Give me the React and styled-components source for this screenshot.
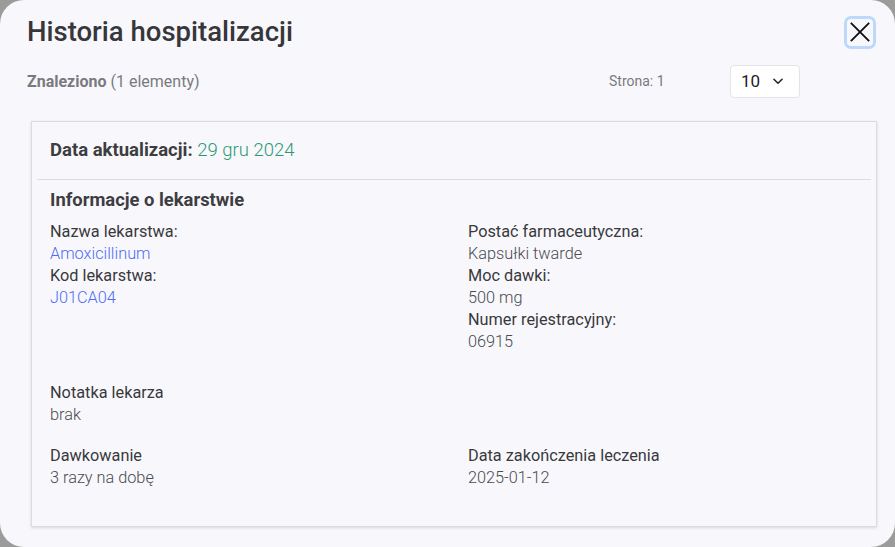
import React from 'react'
import styled, { createGlobalStyle } from 'styled-components'

const Global = createGlobalStyle`
    html, body { margin: 0; padding: 0; }
    body {
        background: #9b9b9b;
        font-family: Roboto, 'Liberation Sans', sans-serif;
        overflow: hidden;
    }
`

const Modal = styled.div`
    box-sizing: border-box;
    width: 895px;
    height: 547px;
    background: #f8f8fc;
    border-radius: 24px;
    padding: 0 18px 0 27px;
    display: flex;
    flex-direction: column;
`

const Header = styled.div`
    display: flex;
    align-items: center;
    justify-content: space-between;
    height: 62px;
`

const Title = styled.h1`
    margin: 0;
    font-size: 27.5px;
    font-weight: 500;
    color: #36363b;
`

const CloseButton = styled.button`
    width: 32px;
    height: 33px;
    padding: 0;
    margin-right: 1px;
    margin-top: 2px;
    border: 3px solid #bcd8fd;
    border-radius: 7px;
    background: #f8f8fc;
    display: flex;
    align-items: center;
    justify-content: center;
    cursor: pointer;
`

const Toolbar = styled.div`
    display: flex;
    align-items: center;
    height: 38px;
`

const Found = styled.div`
    flex: 1;
    font-size: 16px;
    color: #7a7a7e;
    b { font-weight: 700; }
`

const PageInfo = styled.div`
    font-size: 14px;
    color: #7a7a7e;
    width: 121px;
`

const Select = styled.div`
    box-sizing: border-box;
    width: 70px;
    height: 33px;
    margin-right: 77px;
    background: #fff;
    border: 1px solid #e3e3e8;
    border-radius: 4px;
    display: flex;
    align-items: center;
    gap: 11px;
    padding-left: 10px;
    font-size: 17px;
    color: #222;
`

const Card = styled.div`
    margin-top: 21px;
    margin-left: 4px;
    border: 1px solid #dcdce0;
    background: #f8f8fc;
    box-shadow: 0 1px 3px rgba(0, 0, 0, 0.12);
`

const CardHead = styled.div`
    padding: 17px 18px 18px;
    font-size: 18.5px;
    line-height: 22px;
    color: #3d3d42;
    b { font-weight: 700; }
    span { color: #2a9a74; font-weight: 300; }
`

const Divider = styled.hr`
    margin: 0 5px;
    border: 0;
    border-top: 1px solid #dcdce0;
`

const Body = styled.div`
    padding: 9px 18px 37px;
`

const SectionTitle = styled.h2`
    margin: 0 0 10px;
    font-size: 18.4px;
    line-height: 22px;
    font-weight: 700;
    color: #3d3d42;
`

const Grid = styled.div`
    display: grid;
    grid-template-columns: 418px 1fr;
    margin-top: ${p => p.$top || 0}px;
`

const Label = styled.div`
    font-size: 16.3px;
    line-height: 22px;
    color: #38383d;
`

const Value = styled.div`
    font-size: 16.3px;
    line-height: 22px;
    font-weight: 300;
    color: ${p => p.$link ? '#4d6cf5' : '#4a4a4f'};
`

const Field = ({ label, value, link }) => (
    <div>
        <Label>{label}</Label>
        <Value $link={link}>{value}</Value>
    </div>
)

const Chevron = () => (
    <svg width='14' height='14' viewBox='0 0 24 24' fill='none' stroke='#222' strokeWidth='2.6' strokeLinecap='round' strokeLinejoin='round'>
        <path d='M5 9l7 7 7-7' />
    </svg>
)

const CloseIcon = () => (
    <svg width='22' height='22' viewBox='0 0 24 24' fill='none' stroke='#111' strokeWidth='2'>
        <path d='M2 2l20 20M22 2L2 22' />
    </svg>
)

export default function App() {
    return (
        <>
            <Global />
            <Modal>
                <Header>
                    <Title>Historia hospitalizacji</Title>
                    <CloseButton aria-label='Zamknij'><CloseIcon /></CloseButton>
                </Header>

                <Toolbar>
                    <Found><b>Znaleziono</b> (1 elementy)</Found>
                    <PageInfo>Strona: 1</PageInfo>
                    <Select>10 <Chevron /></Select>
                </Toolbar>

                <Card>
                    <CardHead><b>Data aktualizacji:</b> <span>29 gru 2024</span></CardHead>
                    <Divider />
                    <Body>
                        <SectionTitle>Informacje o lekarstwie</SectionTitle>
                        <Grid>
                            <div>
                                <Field label='Nazwa lekarstwa:' value='Amoxicillinum' link />
                                <Field label='Kod lekarstwa:' value='J01CA04' link />
                            </div>
                            <div>
                                <Field label='Postać farmaceutyczna:' value='Kapsułki twarde' />
                                <Field label='Moc dawki:' value='500 mg' />
                                <Field label='Numer rejestracyjny:' value='06915' />
                            </div>
                        </Grid>
                        <Grid $top={29}>
                            <Field label='Notatka lekarza' value='brak' />
                        </Grid>
                        <Grid $top={19}>
                            <Field label='Dawkowanie' value='3 razy na dobę' />
                            <Field label='Data zakończenia leczenia' value='2025-01-12' />
                        </Grid>
                    </Body>
                </Card>
            </Modal>
        </>
    )
}
